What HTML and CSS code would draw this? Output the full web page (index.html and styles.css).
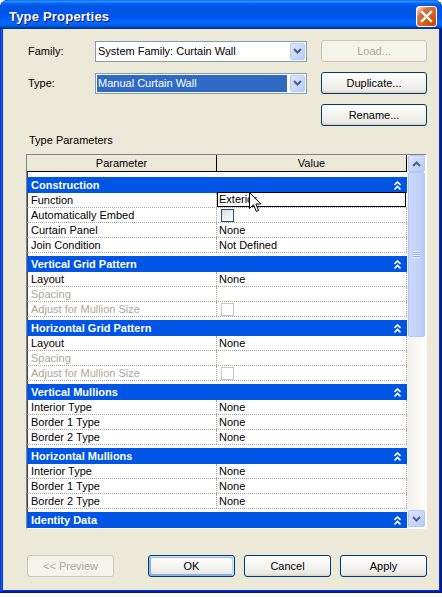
FILE: index.html
```html
<!DOCTYPE html>
<html lang="en">
<head>
    <meta charset="UTF-8">
    <meta name="viewport" content="width=device-width, initial-scale=1.0">
    <title>Type Properties</title>
    <link rel="stylesheet" href="styles.css">
</head>
<body>

    <div class="window">
        <div class="titlebar">
            <span class="titlebar__text">Type Properties</span>
            <button class="titlebar__close" type="button">
                <svg width="13" height="13" viewBox="0 0 13 13"><path d="M2 2 L11 11 M11 2 L2 11" stroke="#fff" stroke-width="2.4" stroke-linecap="square"/></svg>
            </button>
        </div>

        <div class="client">
            <div class="fields">
                <span class="fields__label">Family:</span>
                <div class="combo">
                    <span class="combo__text">System Family: Curtain Wall</span>
                    <span class="combo__arrow"><svg width="9" height="6" viewBox="0 0 9 6"><path d="M1 1 L4.5 4.5 L8 1" fill="none" stroke="#4d6185" stroke-width="2"/></svg></span>
                </div>
                <button class="button button--disabled fields__button" type="button">Load...</button>

                <span class="fields__label">Type:</span>
                <div class="combo">
                    <span class="combo__text combo__text--selected">Manual Curtain Wall</span>
                    <span class="combo__arrow"><svg width="9" height="6" viewBox="0 0 9 6"><path d="M1 1 L4.5 4.5 L8 1" fill="none" stroke="#4d6185" stroke-width="2"/></svg></span>
                </div>
                <button class="button fields__button" type="button">Duplicate...</button>

                <button class="button fields__button fields__rename" type="button">Rename...</button>
            </div>

            <p class="section-label">Type Parameters</p>

            <div class="grid">
                <div class="grid__table">
                    <div class="grid__head">
                        <div class="grid__head-cell">Parameter</div>
                        <div class="grid__head-cell">Value</div>
                    </div>

                    <div class="cat cat--first"><span>Construction</span><svg class="cat__icon" width="7" height="9" viewBox="0 0 7 9"><path d="M0.5 4 L3.5 1 L6.5 4 M0.5 8.5 L3.5 5.5 L6.5 8.5" fill="none" stroke="#fff" stroke-width="1.6"/></svg></div>
                    <div class="row">
                        <div class="row__param">Function</div>
                        <div class="row__value row__value--edit">Exterior
                            <svg class="cursor" width="13" height="21" viewBox="0 0 13 21"><path d="M0.5 0.5 V16.5 L4.5 12.8 L7.3 19.5 L9.6 18.5 L6.9 12 H11.8 Z" fill="#fff" stroke="#000" stroke-width="1"/></svg>
                        </div>
                    </div>
                    <div class="row">
                        <div class="row__param">Automatically Embed</div>
                        <div class="row__value"><span class="check"></span></div>
                    </div>
                    <div class="row">
                        <div class="row__param">Curtain Panel</div>
                        <div class="row__value">None</div>
                    </div>
                    <div class="row">
                        <div class="row__param">Join Condition</div>
                        <div class="row__value">Not Defined</div>
                    </div>

                    <div class="cat"><span>Vertical Grid Pattern</span><svg class="cat__icon" width="7" height="9" viewBox="0 0 7 9"><path d="M0.5 4 L3.5 1 L6.5 4 M0.5 8.5 L3.5 5.5 L6.5 8.5" fill="none" stroke="#fff" stroke-width="1.6"/></svg></div>
                    <div class="row">
                        <div class="row__param">Layout</div>
                        <div class="row__value">None</div>
                    </div>
                    <div class="row">
                        <div class="row__param row__param--disabled">Spacing</div>
                        <div class="row__value"></div>
                    </div>
                    <div class="row">
                        <div class="row__param row__param--disabled">Adjust for Mullion Size</div>
                        <div class="row__value"><span class="check check--disabled"></span></div>
                    </div>

                    <div class="cat"><span>Horizontal Grid Pattern</span><svg class="cat__icon" width="7" height="9" viewBox="0 0 7 9"><path d="M0.5 4 L3.5 1 L6.5 4 M0.5 8.5 L3.5 5.5 L6.5 8.5" fill="none" stroke="#fff" stroke-width="1.6"/></svg></div>
                    <div class="row">
                        <div class="row__param">Layout</div>
                        <div class="row__value">None</div>
                    </div>
                    <div class="row">
                        <div class="row__param row__param--disabled">Spacing</div>
                        <div class="row__value"></div>
                    </div>
                    <div class="row">
                        <div class="row__param row__param--disabled">Adjust for Mullion Size</div>
                        <div class="row__value"><span class="check check--disabled"></span></div>
                    </div>

                    <div class="cat"><span>Vertical Mullions</span><svg class="cat__icon" width="7" height="9" viewBox="0 0 7 9"><path d="M0.5 4 L3.5 1 L6.5 4 M0.5 8.5 L3.5 5.5 L6.5 8.5" fill="none" stroke="#fff" stroke-width="1.6"/></svg></div>
                    <div class="row">
                        <div class="row__param">Interior Type</div>
                        <div class="row__value">None</div>
                    </div>
                    <div class="row">
                        <div class="row__param">Border 1 Type</div>
                        <div class="row__value">None</div>
                    </div>
                    <div class="row">
                        <div class="row__param">Border 2 Type</div>
                        <div class="row__value">None</div>
                    </div>

                    <div class="cat"><span>Horizontal Mullions</span><svg class="cat__icon" width="7" height="9" viewBox="0 0 7 9"><path d="M0.5 4 L3.5 1 L6.5 4 M0.5 8.5 L3.5 5.5 L6.5 8.5" fill="none" stroke="#fff" stroke-width="1.6"/></svg></div>
                    <div class="row">
                        <div class="row__param">Interior Type</div>
                        <div class="row__value">None</div>
                    </div>
                    <div class="row">
                        <div class="row__param">Border 1 Type</div>
                        <div class="row__value">None</div>
                    </div>
                    <div class="row">
                        <div class="row__param">Border 2 Type</div>
                        <div class="row__value">None</div>
                    </div>

                    <div class="cat"><span>Identity Data</span><svg class="cat__icon" width="7" height="9" viewBox="0 0 7 9"><path d="M0.5 4 L3.5 1 L6.5 4 M0.5 8.5 L3.5 5.5 L6.5 8.5" fill="none" stroke="#fff" stroke-width="1.6"/></svg></div>
                    <div class="row">
                        <div class="row__param"></div>
                        <div class="row__value"></div>
                    </div>
                </div>

                <div class="scrollbar">
                    <div class="scrollbar__btn"><svg width="9" height="6" viewBox="0 0 9 6"><path d="M1 5 L4.5 1.5 L8 5" fill="none" stroke="#4d6185" stroke-width="2"/></svg></div>
                    <div class="scrollbar__thumb">
                        <span class="scrollbar__grip"></span>
                    </div>
                    <div class="scrollbar__track"></div>
                    <div class="scrollbar__btn"><svg width="9" height="6" viewBox="0 0 9 6"><path d="M1 1 L4.5 4.5 L8 1" fill="none" stroke="#4d6185" stroke-width="2"/></svg></div>
                </div>
            </div>

            <div class="actions">
                <button class="button button--disabled actions__preview" type="button">&lt;&lt; Preview</button>
                <button class="button button--default" type="button">OK</button>
                <button class="button" type="button">Cancel</button>
                <button class="button" type="button">Apply</button>
            </div>
        </div>
    </div>

</body>
</html>
```

FILE: styles.css
```css
* {
    box-sizing: border-box;
}

body {
    margin: 0;
    background: #fff;
    font-family: "Liberation Sans", Arial, sans-serif;
    font-size: 11px;
    color: #000;
}

.window {
    width: 442px;
    height: 593px;
    display: flex;
    flex-direction: column;
    background: #0831d9;
    border-radius: 8px 8px 0 0;
    box-shadow: inset -1px -1px #00138c, inset 1px 1px #0831d9, inset -2px -2px #001ea0, inset 2px 2px #166aee;
    overflow: hidden;
}

.titlebar {
    height: 30px;
    display: flex;
    align-items: center;
    justify-content: space-between;
    padding: 3px 5px 0 9px;
    background: linear-gradient(180deg, #0058ee 0%, #3593ff 4%, #288eff 6%, #127dff 8%, #036ffc 10%, #0262ee 14%, #0057e5 20%, #0054e3 24%, #0055eb 56%, #005bf5 66%, #026afe 76%, #0062ef 86%, #0052d6 92%, #0040ab 94%, #003092 100%);
}

.titlebar__text {
    color: #fff;
    font-weight: bold;
    font-size: 13px;
    letter-spacing: 0.2px;
    text-shadow: 1px 1px #0f1089;
}

.titlebar__close {
    width: 21px;
    height: 21px;
    padding: 0;
    display: flex;
    align-items: center;
    justify-content: center;
    border: 1px solid #fff;
    border-radius: 3px;
    background: radial-gradient(circle at 90% 90%, #cc4600 0%, #dc6527 55%, #cd7546 70%, #ffccb2 90%, #fff 100%);
}

.client {
    flex: 1;
    margin: 0 3px 3px 3px;
    padding: 11px 12px 13px 23px;
    background: #ece9d8;
    display: flex;
    flex-direction: column;
}

.fields {
    display: grid;
    grid-template-columns: 69px 212px 1fr;
    grid-template-rows: 22px 22px 22px;
    row-gap: 10px;
    align-items: center;
}

.fields__label {
    padding-left: 2px;
}

.fields__button {
    margin-left: 14px;
}

.fields__rename {
    grid-column: 3;
}

.combo {
    height: 21px;
    display: flex;
    align-items: center;
    padding: 1px;
    border: 1px solid #7f9db9;
    background: #fff;
}

.combo__text {
    flex: 1;
    height: 17px;
    line-height: 17px;
    margin-right: 3px;
    padding-left: 1px;
}

.combo__text--selected {
    background: #316ac5;
    color: #fff;
}

.combo__arrow {
    width: 15px;
    height: 17px;
    display: flex;
    align-items: center;
    justify-content: center;
    border: 1px solid #b9cbf3;
    border-radius: 2px;
    background: linear-gradient(135deg, #dde7fe, #b8cbf8);
}

.button {
    height: 22px;
    padding: 0;
    font-family: inherit;
    font-size: 11px;
    color: #000;
    border: 1px solid #003c74;
    border-radius: 3px;
    background: linear-gradient(180deg, #fff, #ecebe5 86%, #d8d0c4);
}

.button--default {
    box-shadow: inset -1px 1px #cee7ff, inset 1px 2px #98b8ea, inset -2px 2px #bcd4f6, inset 1px -1px #89ade4, inset 2px -2px #89ade4;
}

.button--disabled {
    color: #aca899;
    border-color: #c9c7ba;
    background: #f5f4ea;
}

.section-label {
    margin: 8px 0 0 3px;
    line-height: 13px;
}

.grid {
    margin-top: 7px;
    height: 375px;
    display: flex;
    border: 1px solid;
    border-color: #848284 #fff #fff #848284;
    background: #fff;
}

.grid__table {
    width: 380px;
    overflow: hidden;
    box-shadow: inset 1px 0 #404040;
}

.grid__head {
    display: flex;
    height: 17px;
    border-bottom: 1px solid #000;
    background: #ece9d8;
}

.grid__head-cell {
    width: 190px;
    line-height: 16px;
    text-align: center;
    border-right: 1px solid #000;
}

.cat {
    height: 16px;
    margin-top: 3px;
    padding: 0 6px 0 4px;
    display: flex;
    align-items: center;
    justify-content: space-between;
    background: #0055e5;
    color: #fff;
    font-weight: bold;
}

.cat--first {
    margin-top: 5px;
}

.row {
    display: flex;
    height: 15px;
    line-height: 14px;
    border-bottom: 1px dotted #aca899;
}

.row__param {
    width: 190px;
    padding-left: 4px;
    border-right: 1px dotted #aca899;
    white-space: nowrap;
}

.row__param--disabled {
    color: #aca899;
}

.row__value {
    width: 190px;
    padding-left: 2px;
    border-right: 1px dotted #aca899;
    position: relative;
}

.row__value--edit {
    border: 1px solid #000;
    margin-top: -1px;
    height: 15px;
    width: 189px;
    padding-left: 1px;
    line-height: 13px;
}

.cursor {
    position: absolute;
    left: 31px;
    top: -1px;
}

.check {
    display: block;
    width: 13px;
    height: 13px;
    margin: 1px 0 0 2px;
    border: 1px solid #1c5180;
    background: linear-gradient(135deg, #dcdcd7, #fff);
}

.check--disabled {
    border-color: #cac8bb;
    background: #fff;
}

.scrollbar {
    width: 19px;
    display: flex;
    flex-direction: column;
    padding: 0 1px 1px 1px;
    background: linear-gradient(90deg, #f3f1ec, #fefefb);
}

.scrollbar__btn {
    height: 17px;
    display: flex;
    align-items: center;
    justify-content: center;
    border: 1px solid #b4c8f6;
    border-radius: 2px;
    background: linear-gradient(135deg, #dbe5fd, #b7caf8);
}

.scrollbar__thumb {
    height: 165px;
    display: flex;
    align-items: center;
    justify-content: center;
    border: 1px solid #b4c8f6;
    border-radius: 2px;
    background: linear-gradient(90deg, #cad9fd, #c1d2fb 60%, #b6c9f7);
}

.scrollbar__grip {
    width: 7px;
    height: 7px;
    background: repeating-linear-gradient(180deg, #eef4fe 0, #eef4fe 1px, #8cb0f8 1px, #8cb0f8 2px);
}

.scrollbar__track {
    flex: 1;
}

.actions {
    display: flex;
    gap: 9px;
    margin-top: 26px;
    padding-left: 1px;
}

.actions .button {
    width: 87px;
}

.actions__preview {
    margin-right: auto;
}
```
